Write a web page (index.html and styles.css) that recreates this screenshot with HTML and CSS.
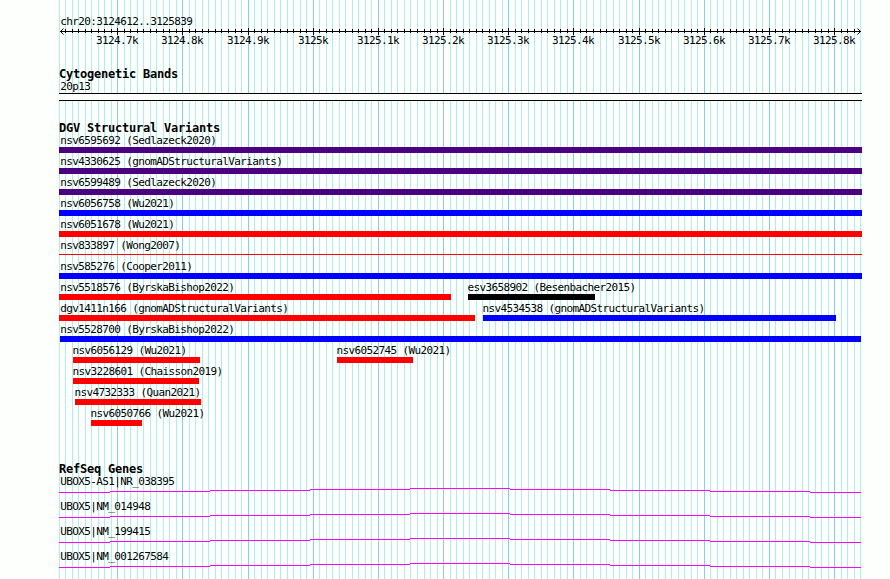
FILE: index.html
```html
<!DOCTYPE html>
<html lang="en">
<head>
    <meta charset="UTF-8">
    <meta name="viewport" content="width=device-width, initial-scale=1.0">
    <title>chr20:3124612..3125839</title>
    <link rel="stylesheet" href="styles.css">
</head>
<body>
    <div class="browser">
        <!-- Vertical grid behind all tracks -->
        <svg class="grid" id="grid" width="890" height="579"></svg>

        <!-- Scale -->
        <div class="ruler">
            <div class="label">chr20:3124612..3125839</div>
            <svg class="scale" id="scale" width="890" height="22">
                <path class="axis" d="M60 4.5H861M63.5 1.5L60.5 4.5L63.5 7.5M857.5 1.5L860.5 4.5L857.5 7.5"/>
            </svg>
        </div>

        <!-- Cytogenetic Bands -->
        <div class="track cyto">
            <h2>Cytogenetic Bands</h2>
            <div class="label">20p13</div>
            <div class="band"></div>
        </div>

        <!-- Structural Variants -->
        <div class="track variants">
            <h2>DGV Structural Variants</h2>
            <div class="row">
                <div class="feature clipped purple" style="width: 803px"><span class="label">nsv6595692 (Sedlazeck2020)</span></div>
            </div>
            <div class="row">
                <div class="feature clipped purple" style="width: 803px"><span class="label">nsv4330625 (gnomADStructuralVariants)</span></div>
            </div>
            <div class="row">
                <div class="feature clipped purple" style="width: 803px"><span class="label">nsv6599489 (Sedlazeck2020)</span></div>
            </div>
            <div class="row">
                <div class="feature clipped blue" style="width: 803px"><span class="label">nsv6056758 (Wu2021)</span></div>
            </div>
            <div class="row">
                <div class="feature clipped red" style="width: 803px"><span class="label">nsv6051678 (Wu2021)</span></div>
            </div>
            <div class="row">
                <div class="feature clipped red thin" style="width: 803px"><span class="label">nsv833897 (Wong2007)</span></div>
            </div>
            <div class="row">
                <div class="feature clipped blue" style="width: 803px"><span class="label">nsv585276 (Cooper2011)</span></div>
            </div>
            <div class="row">
                <div class="feature clipped red" style="width: 392px"><span class="label">nsv5518576 (ByrskaBishop2022)</span></div>
                <div class="feature black" style="margin-left: 17px; width: 127px"><span class="label">esv3658902 (Besenbacher2015)</span></div>
            </div>
            <div class="row">
                <div class="feature clipped red" style="width: 416px"><span class="label">dgv1411n166 (gnomADStructuralVariants)</span></div>
                <div class="feature blue" style="margin-left: 8px; width: 353px"><span class="label">nsv4534538 (gnomADStructuralVariants)</span></div>
            </div>
            <div class="row">
                <div class="feature inset blue" style="margin-left: 1px; width: 801px"><span class="label">nsv5528700 (ByrskaBishop2022)</span></div>
            </div>
            <div class="row">
                <div class="feature red" style="margin-left: 14px; width: 127px"><span class="label">nsv6056129 (Wu2021)</span></div>
                <div class="feature red" style="margin-left: 137px; width: 76px"><span class="label">nsv6052745 (Wu2021)</span></div>
            </div>
            <div class="row">
                <div class="feature red" style="margin-left: 14px; width: 126px"><span class="label">nsv3228601 (Chaisson2019)</span></div>
            </div>
            <div class="row">
                <div class="feature red" style="margin-left: 16px; width: 126px"><span class="label">nsv4732333 (Quan2021)</span></div>
            </div>
            <div class="row">
                <div class="feature red" style="margin-left: 32px; width: 51px"><span class="label">nsv6050766 (Wu2021)</span></div>
            </div>
        </div>

        <!-- Genes -->
        <div class="track genes">
            <h2>RefSeq Genes</h2>
            <div class="gene">
                <div class="label">UBOX5-AS1|NR_038395</div>
                <svg class="intron" width="802" height="5"><path d="M0 4.5H51M51 3.5H151M151 2.5H251M251 1.5H351M351 .5H451M451 1.5H551M551 2.5H651M651 3.5H751M751 4.5H802"/></svg>
            </div>
            <div class="gene">
                <div class="label">UBOX5|NM_014948</div>
                <svg class="intron" width="802" height="5"><path d="M0 4.5H51M51 3.5H151M151 2.5H251M251 1.5H351M351 .5H451M451 1.5H551M551 2.5H651M651 3.5H751M751 4.5H802"/></svg>
            </div>
            <div class="gene">
                <div class="label">UBOX5|NM_199415</div>
                <svg class="intron" width="802" height="5"><path d="M0 4.5H51M51 3.5H151M151 2.5H251M251 1.5H351M351 .5H451M451 1.5H551M551 2.5H651M651 3.5H751M751 4.5H802"/></svg>
            </div>
            <div class="gene">
                <div class="label">UBOX5|NM_001267584</div>
                <svg class="intron" width="802" height="5"><path d="M0 4.5H51M51 3.5H151M151 2.5H251M251 1.5H351M351 .5H451M451 1.5H551M551 2.5H651M651 3.5H751M751 4.5H802"/></svg>
            </div>
        </div>
    </div>

    <script>
        var grid = document.getElementById('grid');
        var scale = document.getElementById('scale');

        function add(parent, name, attrs, text) {
            var el = document.createElementNS('http://www.w3.org/2000/svg', name);
            for (var key in attrs) {
                el.setAttribute(key, attrs[key]);
            }
            if (text) {
                el.textContent = text;
            }
            parent.appendChild(el);
        }

        // One line every 10 bp, a labelled one every 100 bp (3124.7k is i = 0)
        for (var i = -9; i <= 114; i++) {
            var x = Math.floor(117.68 + i * 6.518);
            var major = i % 10 === 0;
            add(grid, 'rect', { 'class': major ? 'major' : 'minor', x: x, y: 0, width: 1, height: 579 });
            if (i > -9 && i < 114) {
                add(scale, 'rect', { x: x, y: major ? 1 : 2, width: 1, height: major ? 7 : 4 });
            }
            if (major) {
                var name = (31247 + i / 10) / 10 + 'k';
                add(scale, 'text', { x: x - name.length * 3, y: 17 }, name);
            }
        }
    </script>
</body>
</html>
```
FILE: styles.css
```css
body {
    margin: 0;
    background: #fdfffc;
    color: #000;
    font-family: 'DejaVu Sans Mono', 'Liberation Mono', monospace;
    font-size: 11px;
    line-height: 13px;
    letter-spacing: -0.62px;
    overflow: hidden;
}

.browser {
    position: relative;
    width: 890px;
    height: 579px;
    overflow: hidden;
}

svg {
    display: block;
}

/* Grid */
.grid {
    position: absolute;
    top: 0;
    left: 0;
    z-index: -1;
}

.minor {
    fill: #afeeee;
}

.major {
    fill: #87ceeb;
}

/* Ruler */
.ruler {
    height: 52px;
    padding-top: 15px;
}

.ruler .label {
    height: 12px;
    padding-left: 60.2px;
}

.axis {
    fill: none;
    stroke: #000;
    stroke-width: 1;
}

/* Tracks */
.track {
    padding-left: 59px;
}

h2 {
    margin: 0;
    height: 13px;
    font-size: 12px;
    line-height: 14px;
    letter-spacing: -0.22px;
}

.label {
    display: block;
    height: 13px;
    padding-left: 1.2px;
    white-space: nowrap;
}

.cyto {
    height: 54px;
}

.band {
    box-sizing: border-box;
    width: 803px;
    height: 8px;
    border-top: 1px solid #000;
    border-bottom: 1px solid #000;
    background: #fdfffc;
}

/* Variants */
.variants {
    height: 341px;
}

.row {
    display: flex;
    height: 21px;
}

.feature {
    flex: none;
    height: 19px;
}

.feature .label {
    padding-left: 0;
    margin-left: -0.6px;
}

.feature.clipped .label {
    margin-left: 1.2px;
}

.feature.inset .label {
    margin-left: 0.2px;
}

.feature::after {
    content: "";
    display: block;
    height: 6px;
}

.feature.thin::after {
    height: 1px;
    margin-top: 2px;
}

.purple::after {
    background: #4b0082;
}

.blue::after {
    background: #00f;
}

.red::after {
    background: #f00;
}

.black::after {
    background: #000;
}

/* Genes */
.gene {
    height: 25px;
}

.intron path {
    fill: none;
    stroke: #f0f;
}
```
